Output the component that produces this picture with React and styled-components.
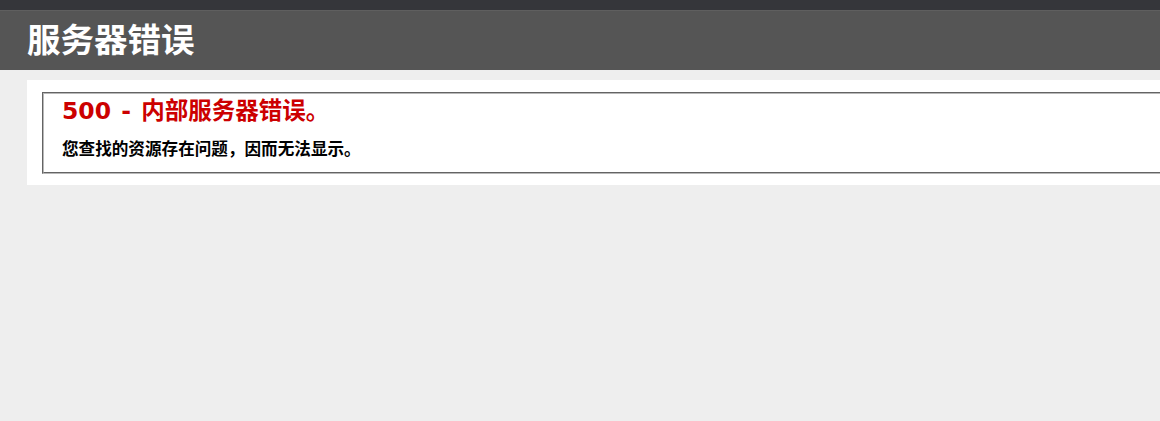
import React from "react";
import styled, { createGlobalStyle } from "styled-components";

const GlobalStyle = createGlobalStyle`
  html, body {
    margin: 0;
    padding: 0;
    background: #eeeeee;
    overflow: hidden;
  }
  body {
    font-family: "DejaVu Sans", Verdana, "Noto Sans CJK SC", sans-serif;
    font-size: 11px;
  }
`;

const Page = styled.div`
  display: flex;
  flex-direction: column;
  min-height: 421px;
`;

const TopStrip = styled.div`
  height: 10px;
  background: #35363a;
`;

const Header = styled.header`
  height: 59px;
  border-top: 1px solid #5f5f5f;
  background: #555555;
  display: flex;
  align-items: center;
  padding-left: 27px;
`;

const Title = styled.h1`
  margin: 0;
  color: #ffffff;
  font-family: "DejaVu Sans", "Noto Sans CJK SC", sans-serif;
  font-size: 33.5px;
  font-weight: 700;
  line-height: 40px;
`;

const Content = styled.main`
  margin: 10px 0 0 27px;
`;

const Container = styled.div`
  width: 100%;
  background: #ffffff;
  padding: 12px 0 11px 15px;
`;

const Fieldset = styled.fieldset`
  margin: 0;
  min-width: 0;
  border: 2px groove #b8b8b8;
  padding: 0 0 10px 18px;
`;

const ErrorTitle = styled.h2`
  margin: 0;
  color: #cc0000;
  font-family: "DejaVu Sans", "Noto Sans CJK SC", sans-serif;
  font-size: 23.5px;
  font-weight: 700;
  line-height: 34px;
  word-spacing: 2px;
`;

const ErrorText = styled.h3`
  margin: 10px 0 0 0;
  color: #000000;
  font-family: "DejaVu Sans", "Noto Sans CJK SC", sans-serif;
  font-size: 16.6px;
  font-weight: 700;
  line-height: 24px;
`;

export default function App() {
  return (
    <>
      <GlobalStyle />
      <Page>
        <TopStrip />
        <Header>
          <Title>服务器错误</Title>
        </Header>
        <Content>
          <Container>
            <Fieldset>
              <ErrorTitle>500 - 内部服务器错误。</ErrorTitle>
              <ErrorText>您查找的资源存在问题，因而无法显示。</ErrorText>
            </Fieldset>
          </Container>
        </Content>
      </Page>
    </>
  );
}
